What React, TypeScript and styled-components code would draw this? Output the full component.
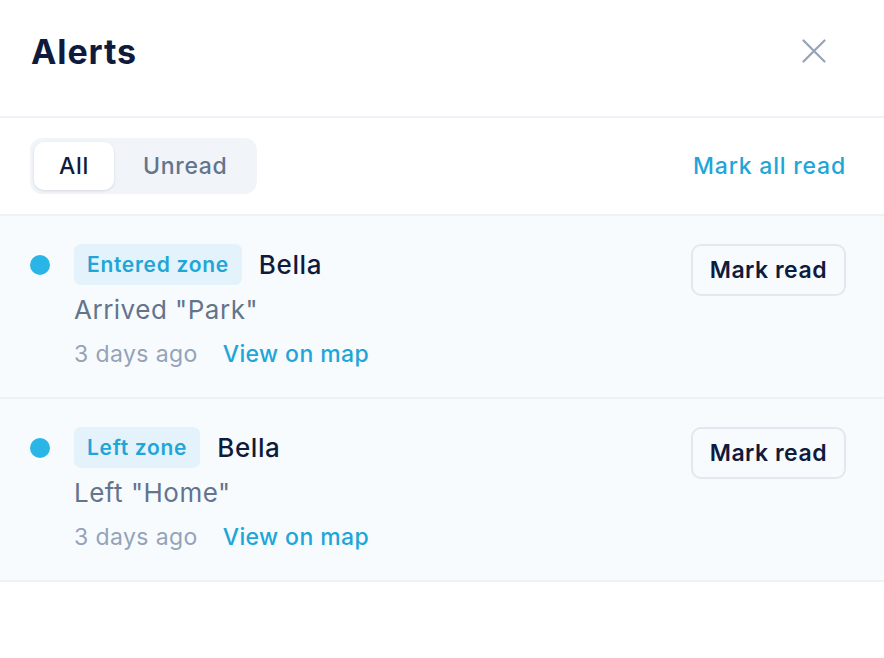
import React, { useState } from "react";
import styled, { createGlobalStyle } from "styled-components";

type AlertItem = {
  id: number;
  kind: string;
  pet: string;
  message: string;
  time: string;
};

const alerts: AlertItem[] = [
  { id: 1, kind: "Entered zone", pet: "Bella", message: 'Arrived "Park"', time: "3 days ago" },
  { id: 2, kind: "Left zone", pet: "Bella", message: 'Left "Home"', time: "3 days ago" },
];

const GlobalStyle = createGlobalStyle`
  html, body {
    margin: 0;
    padding: 0;
    background: #fff;
  }
  body {
    font-family: Inter, "Noto Sans", sans-serif;
    -webkit-font-smoothing: antialiased;
  }
`;

const Panel = styled.div`
  width: 884px;
  min-height: 658px;
  background: #fff;
  display: flex;
  flex-direction: column;
`;

const Header = styled.div`
  height: 118px;
  box-sizing: border-box;
  padding: 0 57px 14px 31px;
  display: flex;
  align-items: center;
  justify-content: space-between;
  border-bottom: 2px solid #eef2f7;
`;

const Title = styled.h1`
  margin: 0;
  font-size: 34px;
  font-weight: 700;
  color: #0f1b3d;
  letter-spacing: 0.9px;
`;

const CloseButton = styled.button`
  border: none;
  background: none;
  padding: 0;
  width: 26px;
  height: 26px;
  display: flex;
  align-items: center;
  justify-content: center;
  cursor: pointer;
`;

const Toolbar = styled.div`
  height: 98px;
  box-sizing: border-box;
  padding: 0 38px 0 30px;
  display: flex;
  align-items: center;
  justify-content: space-between;
  border-bottom: 2px solid #eef2f7;
`;

const Segmented = styled.div`
  display: flex;
  gap: 4px;
  padding: 4px;
  background: #f1f5f9;
  border-radius: 12px;
`;

const SegmentButton = styled.button<{ $active: boolean }>`
  height: 48px;
  padding: 0 25px;
  border: none;
  border-radius: 10px;
  font-family: inherit;
  font-size: 23px;
  font-weight: 500;
  letter-spacing: 0.7px;
  cursor: pointer;
  color: ${(p) => (p.$active ? "#0f1b3d" : "#64748b")};
  background: ${(p) => (p.$active ? "#fff" : "transparent")};
  box-shadow: ${(p) => (p.$active ? "0 1px 3px rgba(15, 27, 61, 0.12)" : "none")};
`;

const LinkButton = styled.button`
  border: none;
  background: none;
  padding: 0;
  font-family: inherit;
  font-size: 23px;
  font-weight: 500;
  letter-spacing: 0.8px;
  color: #1ea6d8;
  cursor: pointer;
`;

const Row = styled.div`
  display: flex;
  align-items: flex-start;
  padding: 28px 38px 23px 30px;
  background: #f7fbfe;
  border-bottom: 2px solid #eef2f7;
`;

const Dot = styled.span`
  width: 20px;
  height: 20px;
  border-radius: 50%;
  background: #29b6e6;
  margin-top: 11px;
  flex-shrink: 0;
`;

const Body = styled.div`
  flex: 1;
  margin-left: 24px;
  display: flex;
  flex-direction: column;
`;

const TopLine = styled.div`
  display: flex;
  align-items: center;
  gap: 17px;
`;

const Badge = styled.span`
  height: 41px;
  display: inline-flex;
  align-items: center;
  padding: 0 13px;
  border-radius: 7px;
  background: #e4f3fb;
  color: #20a6d6;
  font-size: 21px;
  font-weight: 600;
  letter-spacing: 0.7px;
`;

const PetName = styled.span`
  font-size: 26px;
  font-weight: 500;
  letter-spacing: 0.6px;
  color: #0f1b3d;
`;

const Message = styled.div`
  margin-top: 5px;
  line-height: 40px;
  font-size: 26px;
  letter-spacing: 0.5px;
  color: #64748b;
`;

const MetaLine = styled.div`
  margin-top: 4px;
  line-height: 40px;
  display: flex;
  gap: 25px;
  font-size: 23px;
  letter-spacing: 0.4px;
`;

const Time = styled.span`
  color: #94a3b8;
`;

const MapLink = styled.a`
  color: #1ea6d8;
  font-weight: 500;
  text-decoration: none;
  cursor: pointer;
`;

const MarkButton = styled.button`
  height: 52px;
  padding: 0 17px;
  border: 2px solid #e2e8f0;
  border-radius: 10px;
  background: #f8fbfe;
  font-family: inherit;
  font-size: 23px;
  font-weight: 600;
  letter-spacing: 0.5px;
  color: #0f1b3d;
  cursor: pointer;
  flex-shrink: 0;
`;

const App = () => {
  const [filter, setFilter] = useState<"all" | "unread">("all");

  return (
    <>
      <GlobalStyle />
      <Panel>
        <Header>
          <Title>Alerts</Title>
          <CloseButton aria-label="Close">
            <svg width="24" height="24" viewBox="0 0 24 24" fill="none">
              <path
                d="M1.5 1.5L22.5 22.5M22.5 1.5L1.5 22.5"
                stroke="#94a3b8"
                strokeWidth="2.2"
                strokeLinecap="round"
              />
            </svg>
          </CloseButton>
        </Header>
        <Toolbar>
          <Segmented>
            <SegmentButton $active={filter === "all"} onClick={() => setFilter("all")}>
              All
            </SegmentButton>
            <SegmentButton $active={filter === "unread"} onClick={() => setFilter("unread")}>
              Unread
            </SegmentButton>
          </Segmented>
          <LinkButton>Mark all read</LinkButton>
        </Toolbar>
        {alerts.map((a) => (
          <Row key={a.id}>
            <Dot />
            <Body>
              <TopLine>
                <Badge>{a.kind}</Badge>
                <PetName>{a.pet}</PetName>
              </TopLine>
              <Message>{a.message}</Message>
              <MetaLine>
                <Time>{a.time}</Time>
                <MapLink>View on map</MapLink>
              </MetaLine>
            </Body>
            <MarkButton>Mark read</MarkButton>
          </Row>
        ))}
      </Panel>
    </>
  );
};

export default App;
